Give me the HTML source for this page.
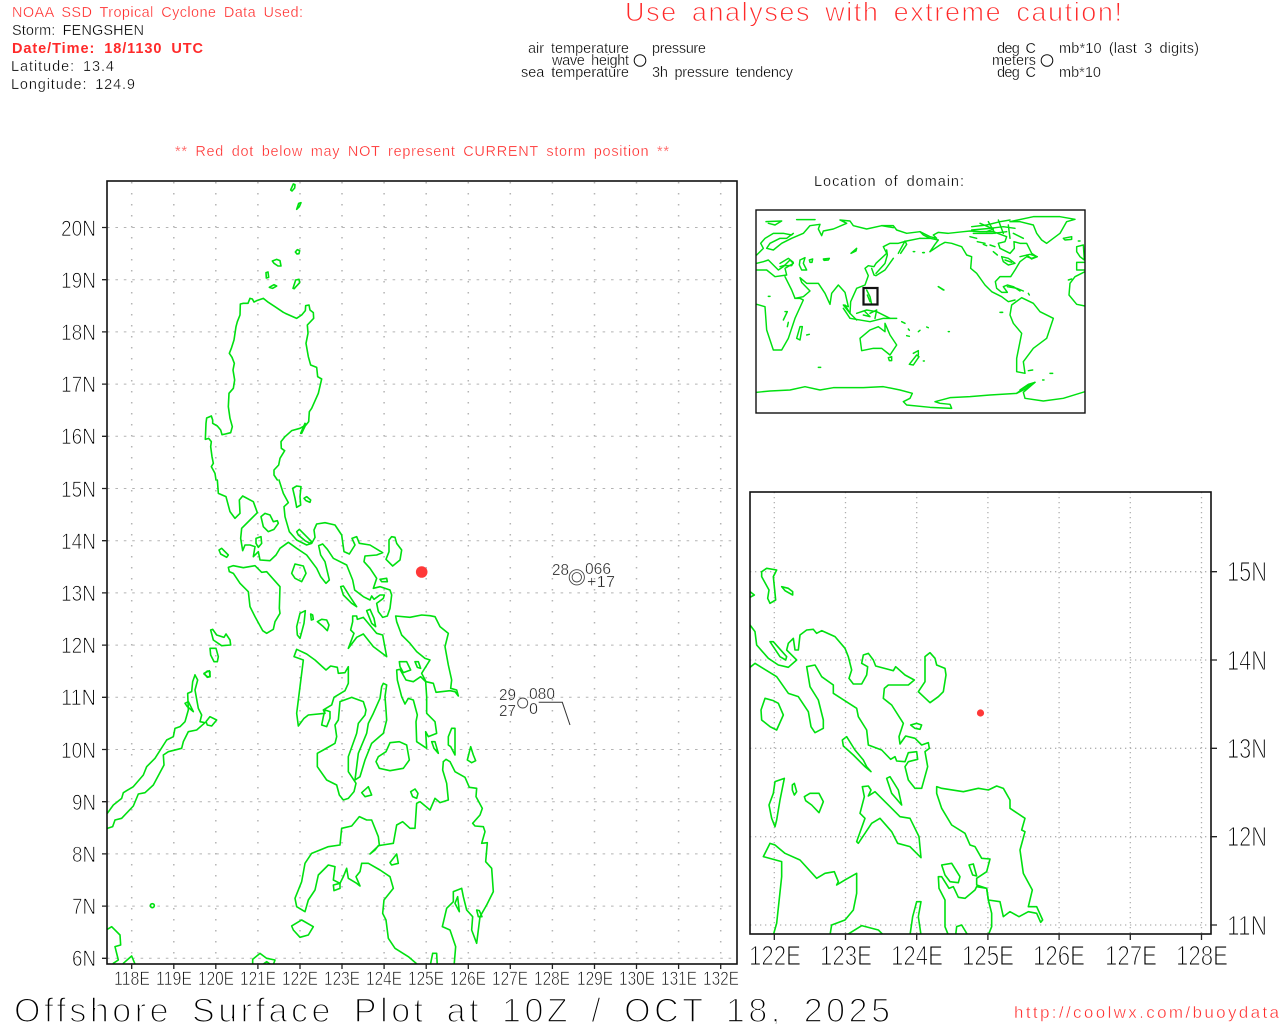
<!DOCTYPE html>
<html>
<head>
<meta charset="utf-8">
<title>Offshore Surface Plot</title>
<style>
html,body{margin:0;padding:0;background:#fff;width:1280px;height:1024px;overflow:hidden}
svg{display:block;position:absolute;left:0;top:0}
text{font-family:"Liberation Sans",sans-serif;white-space:pre}
.r{fill:#ff2a2a}
.k{fill:#000}
.s{font-size:14.5px;word-spacing:3px;stroke:#fff;stroke-width:.3px}
.l1{font-size:22px;stroke:#fff;stroke-width:.8px;fill:#000}
.l2{font-size:19px;stroke:#fff;stroke-width:.65px;fill:#000}
.l3{font-size:28px;stroke:#fff;stroke-width:1.1px;fill:#000}
.st{font-size:16px;fill:#222;stroke:#fff;stroke-width:.35px}
.c{fill:none;stroke:#00e010;stroke-linejoin:round;stroke-linecap:round}
.w polyline,.w polygon{fill:none;stroke:#00e010;stroke-width:4.4;stroke-linejoin:round;stroke-linecap:round}
</style>
</head>
<body>
<svg width="1280" height="1024" viewBox="0 0 1280 1024" xmlns="http://www.w3.org/2000/svg">
<defs>
<clipPath id="cm"><rect x="107" y="181" width="630" height="783"/></clipPath>
<clipPath id="ci"><rect x="750" y="492" width="461" height="442"/></clipPath>
<clipPath id="cw"><rect x="756" y="210" width="329" height="203"/></clipPath>
</defs>

<!-- header text -->
<text class="s r" x="12" y="17" textLength="291" lengthAdjust="spacing">NOAA SSD Tropical Cyclone Data Used:</text>
<text class="s k" x="12" y="35" textLength="132" lengthAdjust="spacing">Storm: FENGSHEN</text>
<text class="r" x="12" y="53" font-size="14.5" font-weight="bold" word-spacing="4" textLength="191" lengthAdjust="spacing">Date/Time: 18/1130 UTC</text>
<text class="s k" x="11" y="71" textLength="103" lengthAdjust="spacing">Latitude: 13.4</text>
<text class="s k" x="11" y="89" textLength="124" lengthAdjust="spacing">Longitude: 124.9</text>
<text class="r" x="625" y="21" font-size="27" word-spacing="5" stroke="#fff" stroke-width=".9" textLength="497" lengthAdjust="spacing">Use analyses with extreme caution!</text>
<text class="s k" x="629" y="53" text-anchor="end" textLength="101" lengthAdjust="spacing">air temperature</text>
<text class="s k" x="629" y="65" text-anchor="end" textLength="77" lengthAdjust="spacing">wave height</text>
<text class="s k" x="629" y="77" text-anchor="end" textLength="108" lengthAdjust="spacing">sea temperature</text>
<circle cx="640" cy="60.5" r="5.8" fill="none" stroke="#111" stroke-width="1"/>
<text class="s k" x="652" y="53" textLength="54" lengthAdjust="spacing">pressure</text>
<text class="s k" x="652" y="77" textLength="141" lengthAdjust="spacing">3h pressure tendency</text>
<text class="s k" x="997" y="53" textLength="39" lengthAdjust="spacing">deg C</text>
<text class="s k" x="992" y="65" textLength="44" lengthAdjust="spacing">meters</text>
<text class="s k" x="997" y="77" textLength="39" lengthAdjust="spacing">deg C</text>
<circle cx="1047" cy="60.5" r="5.8" fill="none" stroke="#111" stroke-width="1"/>
<text class="s k" x="1059" y="53" textLength="140" lengthAdjust="spacing">mb*10 (last 3 digits)</text>
<text class="s k" x="1059" y="77" textLength="42" lengthAdjust="spacing">mb*10</text>
<text class="s r" x="175" y="156" textLength="494" lengthAdjust="spacing">** Red dot below may NOT represent CURRENT storm position **</text>
<text class="s k" x="814" y="186" textLength="150" lengthAdjust="spacing">Location of domain:</text>

<!-- main grid -->
<g fill="none" stroke="#b4b4b4">
<path stroke-width="1" stroke-dasharray="2.6 5.8" d="M107 227.5H737M107 279.7H737M107 331.9H737M107 384.1H737M107 436.3H737M107 488.5H737M107 540.7H737M107 592.9H737M107 645.1H737M107 697.3H737M107 749.5H737M107 801.7H737M107 853.9H737M107 906.1H737M107 958.3H737"/>
<path stroke-width="1.5" stroke-dasharray="1.5 9.5" d="M131.7 182V964M173.8 182V964M215.8 182V964M257.9 182V964M300 182V964M342 182V964M384.1 182V964M426.2 182V964M468.3 182V964M510.3 182V964M552.4 182V964M594.5 182V964M636.5 182V964M678.6 182V964M720.7 182V964"/>
</g>

<!-- main coast -->
<g clip-path="url(#cm)">
<g transform="translate(200,180) scale(.33333)" class="c" stroke-width="4.8" fill="none">
<polygon points="272,30 280,12 285,14 284,24 276,33"/>
<polygon points="290,88 296,70 303,68 298,80"/>
<polygon points="286,216 292,209 299,212 297,221 291,222"/>
<polygon points="217,243 230,238 240,242 243,258 234,258 222,250"/>
<polygon points="198,278 204,276 206,292 199,294"/>
<polygon points="208,322 222,314 230,318 218,325"/>
<polygon points="279,325 287,300 297,298 299,308 288,320 283,326"/>
<polygon points="302,760 315,730 318,733 305,760"/>
<polyline points="48,900 45,880 34,860 40,850 36,830 32,800 34,785 26,775 16,778 18,730 20,714 34,708 38,720 38,730 52,738 62,750 66,764 76,762 92,758 97,740 90,715 85,680 87,640 100,625 104,600 99,570 103,550 96,532 88,520 94,505 102,480 108,440 112,425 120,405 121,372 130,370 144,370 150,355 157,357 162,366 170,362 190,355 205,367 225,380 250,397 256,400 290,415 305,405 316,392 317,377 327,375 330,390 340,398 341,415 322,435 324,460 318,490 325,530 332,555 350,562 353,590 365,597 355,640 335,685 328,695 326,725 318,735 300,745 275,752 255,770 243,785 244,805 254,812 240,835 236,855 222,870 222,885 232,900"/>
</g>
<g transform="translate(200,480) scale(.33333)" class="c" stroke-width="4.8" fill="none">
<polyline points="237,0 250,40 265,68 252,80 255,110 268,155 290,180 320,195 335,190 345,172 342,150 350,132 375,128 405,135 425,165 432,215 448,222 465,195 456,175 470,170 478,190 510,195 548,218 530,225 495,228 492,245 510,265 530,295 520,325 540,320 570,330 575,345 570,385 562,408 548,412 535,395 530,370 550,355 553,345 540,345 522,358 515,348 510,360 490,350 464,330 458,300 440,255 400,235 382,208 368,192 356,197 362,225 375,245 388,300 378,310 362,290 350,265 320,225 290,205 265,187 240,205 228,225 210,242 180,240 175,215 160,230 165,200 150,195 135,195 128,212 122,175 125,145 150,120 172,98 160,65 128,48 118,60 120,100 105,115 90,95 78,50 55,40 52,0"/>
<polygon points="290,155 298,148 335,185 330,190 315,182 295,165"/>
<polygon points="278,25 290,18 303,20 300,50 302,75 290,82 285,55"/>
<polygon points="312,55 320,50 332,60 330,67 318,62"/>
<polygon points="183,110 195,100 210,105 220,125 232,122 235,130 222,148 205,155 190,140"/>
<polygon points="168,175 183,170 185,190 175,202 168,190"/>
<polygon points="57,210 65,205 85,225 80,232 62,222"/>
<polygon points="575,170 585,172 590,190 605,210 600,240 578,258 558,238 567,215 567,180"/>
<polygon points="540,298 560,295 562,305 545,305"/>
<polygon points="85,262 100,257 130,263 165,257 185,277 200,275 240,320 238,385 240,400 225,425 220,448 200,460 188,452 165,410 150,380 145,335 120,310 100,280 88,275"/>
<polygon points="285,252 310,258 318,280 305,305 285,295 275,280"/>
<polygon points="300,400 316,392 312,430 300,475 292,465 290,440"/>
<polygon points="332,402 338,405 340,418 334,420"/>
<polygon points="352,425 365,418 380,420 387,435 382,452 370,440"/>
<polygon points="422,320 430,318 450,350 470,380 455,370 430,345"/>
<polygon points="500,392 510,388 522,415 527,440 515,430"/>
<polygon points="458,408 470,408 472,418 490,412 530,460 548,465 560,530 520,500 490,462 470,472 445,505 462,460 452,450 458,425"/>
<polygon points="587,408 630,412 665,405 690,407 705,410 720,440 745,460 735,500 745,555 755,600 752,625 770,630 775,648 765,635 750,632 708,637 700,610 678,605 665,580 690,540 675,535 650,515 630,490 605,465 590,425"/>
<polygon points="598,545 620,545 632,570 610,578 600,560"/>
<polygon points="645,545 655,545 662,565 652,562"/>
<polyline points="680,805 677,755 685,770 710,760 705,725 680,700 680,650 677,605 662,590 640,605 618,600 600,568 590,570 592,600 605,650 615,672 625,655 640,660 652,705 648,725 650,785 680,805"/>
<polygon points="32,450 38,448 50,465 72,472 78,462 90,480 92,495 65,497 40,480"/>
<polygon points="30,505 48,505 55,530 52,545 42,545 32,525"/>
<polygon points="12,580 28,572 30,590 22,592"/>
<polygon points="282,530 290,508 320,522 345,540 378,570 392,558 412,562 415,580 435,578 445,560 445,610 435,632 402,652 395,675 370,690 375,700 325,705 312,715 295,738 290,700 295,660 310,540"/>
</g>
<g transform="translate(280,700) scale(.33333)" class="c" stroke-width="4.8" fill="none">
<polygon points="135,30 150,35 150,55 140,80 125,75 130,50"/>
<polygon points="180,5 215,-8 250,5 258,30 255,45 235,70 230,100 205,170 205,215 228,250 222,275 205,295 190,300 178,285 170,255 140,240 112,200 112,160 130,150 165,130 170,110 165,75 175,60"/>
<polygon points="310,-50 320,-45 315,-10 318,30 320,60 310,100 275,130 255,180 240,230 225,240 235,160 260,100 265,70 280,40 300,-5 305,-40"/>
<polygon points="245,278 265,260 275,285 255,290"/>
<polygon points="288,185 295,170 318,155 330,128 358,125 380,135 388,180 370,205 330,212 298,205"/>
<polygon points="392,275 405,267 414,280 410,295 398,290"/>
<polygon points="505,135 505,110 515,85 525,85 525,130 525,165 512,140"/>
<polygon points="562,180 572,140 580,165 587,182 575,188"/>
<polygon points="455,125 465,125 475,160 462,145"/>
<polyline points="490,185 498,178 510,185 525,215 555,232 568,262 590,265 588,290 607,325 600,345 578,370 585,378 610,380 615,395 605,430 622,428 617,485 635,505 640,575 620,615 600,650 595,690 590,730 575,690 578,650 560,630 550,590 545,565 520,575 520,605 500,625 487,680 510,690 527,740 522,800"/>
<polyline points="420,800 385,770 345,745 325,715 318,660 308,640 312,600 340,565 330,530 300,510 265,490 245,490 240,515 228,530 240,558 230,550 205,535 200,505 190,530 180,550 160,540 165,500 145,495 115,525 105,570 85,600 75,635 50,620 45,595 65,545 75,490 95,460 145,440 180,435 185,385 215,378 238,350 260,360 275,360 295,410 298,435 270,462 285,450 295,437 340,430 350,375 368,365 390,385 405,385 410,310 420,305 450,330 465,295 480,308 505,300 500,250 488,210 490,185"/>
<polygon points="330,488 350,462 355,490 335,495"/>
<polygon points="35,678 65,660 100,680 85,705 60,712 40,690"/>
<polygon points="160,555 180,550 180,565 162,572"/>
<polyline points="450,800 458,760 470,760 472,800"/>
<polygon points="525,610 533,590 538,635 530,620"/>
<polygon points="590,630 598,632 606,650 595,650"/>
</g>
<g transform="translate(100,670) scale(.33333)" class="c" stroke-width="4.8" fill="none">
<polyline points="285,15 293,30 285,60 295,115 305,135 300,155 315,158 290,180 265,185 250,215 245,235 205,245 190,255 192,285 160,345 135,368 115,372 100,408 65,445 45,450 38,470 22,475"/>
<polyline points="22,430 40,405 65,385 70,368 100,350 130,315 140,290 165,265 200,210 220,200 225,175 240,170 255,155 265,120 263,70 275,65 278,35 285,15"/>
<polygon points="255,100 265,95 280,125 262,110"/>
<polygon points="318,155 330,140 350,150 335,168 322,165"/>
<polygon points="312,12 322,3 330,5 330,20 322,20"/>
<circle cx="157" cy="707" r="6"/>
<polyline points="22,778 35,770 60,795 62,825 45,830 55,870 40,880"/>
<polyline points="70,880 95,858 105,882"/>
<polyline points="458,882 458,868 480,850 500,865 525,870 520,884"/>
<polyline points="490,882 500,875 510,882"/>
</g>
</g>

<!-- main frame and ticks -->
<rect x="107" y="181" width="630" height="783" fill="none" stroke="#111" stroke-width="1.6"/>
<path stroke="#222" stroke-width="1.3" fill="none" d="M102 227.5H107M102 279.7H107M102 331.9H107M102 384.1H107M102 436.3H107M102 488.5H107M102 540.7H107M102 592.9H107M102 645.1H107M102 697.3H107M102 749.5H107M102 801.7H107M102 853.9H107M102 906.1H107M102 958.3H107M131.7 964V969M173.8 964V969M215.8 964V969M257.9 964V969M300 964V969M342 964V969M384.1 964V969M426.2 964V969M468.3 964V969M510.3 964V969M552.4 964V969M594.5 964V969M636.5 964V969M678.6 964V969M720.7 964V969"/>

<!-- main labels -->
<g text-anchor="end">
<text class="l1" x="96" y="236" textLength="35" lengthAdjust="spacingAndGlyphs">20N</text>
<text class="l1" x="96" y="288" textLength="35" lengthAdjust="spacingAndGlyphs">19N</text>
<text class="l1" x="96" y="340" textLength="35" lengthAdjust="spacingAndGlyphs">18N</text>
<text class="l1" x="96" y="392" textLength="35" lengthAdjust="spacingAndGlyphs">17N</text>
<text class="l1" x="96" y="444" textLength="35" lengthAdjust="spacingAndGlyphs">16N</text>
<text class="l1" x="96" y="497" textLength="35" lengthAdjust="spacingAndGlyphs">15N</text>
<text class="l1" x="96" y="549" textLength="35" lengthAdjust="spacingAndGlyphs">14N</text>
<text class="l1" x="96" y="601" textLength="35" lengthAdjust="spacingAndGlyphs">13N</text>
<text class="l1" x="96" y="653" textLength="35" lengthAdjust="spacingAndGlyphs">12N</text>
<text class="l1" x="96" y="705" textLength="35" lengthAdjust="spacingAndGlyphs">11N</text>
<text class="l1" x="96" y="758" textLength="35" lengthAdjust="spacingAndGlyphs">10N</text>
<text class="l1" x="96" y="810" textLength="24" lengthAdjust="spacingAndGlyphs">9N</text>
<text class="l1" x="96" y="862" textLength="24" lengthAdjust="spacingAndGlyphs">8N</text>
<text class="l1" x="96" y="914" textLength="24" lengthAdjust="spacingAndGlyphs">7N</text>
<text class="l1" x="96" y="966" textLength="24" lengthAdjust="spacingAndGlyphs">6N</text>
</g>
<g text-anchor="middle">
<text class="l2" x="132" y="985" textLength="36" lengthAdjust="spacingAndGlyphs">118E</text>
<text class="l2" x="174" y="985" textLength="36" lengthAdjust="spacingAndGlyphs">119E</text>
<text class="l2" x="216" y="985" textLength="36" lengthAdjust="spacingAndGlyphs">120E</text>
<text class="l2" x="258" y="985" textLength="36" lengthAdjust="spacingAndGlyphs">121E</text>
<text class="l2" x="300" y="985" textLength="36" lengthAdjust="spacingAndGlyphs">122E</text>
<text class="l2" x="342" y="985" textLength="36" lengthAdjust="spacingAndGlyphs">123E</text>
<text class="l2" x="384" y="985" textLength="36" lengthAdjust="spacingAndGlyphs">124E</text>
<text class="l2" x="426" y="985" textLength="36" lengthAdjust="spacingAndGlyphs">125E</text>
<text class="l2" x="468" y="985" textLength="36" lengthAdjust="spacingAndGlyphs">126E</text>
<text class="l2" x="510" y="985" textLength="36" lengthAdjust="spacingAndGlyphs">127E</text>
<text class="l2" x="552" y="985" textLength="36" lengthAdjust="spacingAndGlyphs">128E</text>
<text class="l2" x="595" y="985" textLength="36" lengthAdjust="spacingAndGlyphs">129E</text>
<text class="l2" x="637" y="985" textLength="36" lengthAdjust="spacingAndGlyphs">130E</text>
<text class="l2" x="679" y="985" textLength="36" lengthAdjust="spacingAndGlyphs">131E</text>
<text class="l2" x="721" y="985" textLength="36" lengthAdjust="spacingAndGlyphs">132E</text>
</g>

<!-- storm dot -->
<circle cx="421.7" cy="572" r="5.8" fill="#ff3838"/>

<!-- station plots -->
<text class="st" x="552" y="575" textLength="17" lengthAdjust="spacingAndGlyphs">28</text>
<text class="st" x="585" y="574" textLength="26" lengthAdjust="spacingAndGlyphs">066</text>
<text class="st" x="587" y="587" textLength="28" lengthAdjust="spacing">+17</text>
<circle cx="576.8" cy="577.3" r="7.6" fill="none" stroke="#444" stroke-width=".9"/>
<circle cx="576.8" cy="577.3" r="4.7" fill="none" stroke="#444" stroke-width=".9"/>
<text class="st" x="499" y="700" textLength="17" lengthAdjust="spacingAndGlyphs">29</text>
<text class="st" x="529" y="699" textLength="26" lengthAdjust="spacingAndGlyphs">080</text>
<text class="st" x="499" y="716" textLength="17" lengthAdjust="spacingAndGlyphs">27</text>
<text class="st" x="529" y="714" textLength="9" lengthAdjust="spacingAndGlyphs">0</text>
<circle cx="522.7" cy="703" r="5" fill="none" stroke="#444" stroke-width=".9"/>
<polyline points="538.7,702.3 562.3,702.3 570,725" fill="none" stroke="#333" stroke-width="1"/>

<!-- world map -->
<g clip-path="url(#cw)">
<g transform="translate(750,205) scale(.33333)" class="w">
<polyline points="20,562 60,558 120,555 165,545 210,555 250,548 340,548 400,545 450,555 487,565 480,580 460,590 470,600 540,607 605,610 600,598 570,595 555,590 600,578 660,575 720,570 800,565 820,550 855,532 820,562 825,580 880,588 940,580 1005,560"/>
<polyline points="800,565 830,550 855,532 835,538 810,555"/>
<polyline points="20,298 45,305 50,375 70,435 95,435 115,400 135,340 160,285 150,280 135,280"/>
<polyline points="20,150 40,130 32,115 45,100 70,85 100,85 125,90 130,85 110,100 90,100 60,115 50,130 70,135 95,115 125,100 160,85 180,62 210,58 205,72 215,92 220,78 250,72 290,55 270,45 300,48 310,62 350,72 395,62 430,62 440,75 470,85 510,80 520,90 540,100 510,100"/>
<polyline points="20,175 40,170 55,165 70,180 85,195 100,185 120,165 130,175 105,190 110,210 75,215 50,195 20,195"/>
<polyline points="90,175 115,160 130,172 125,182 100,182 90,185"/>
<polyline points="150,165 165,158 160,175 170,195 155,195 148,180 150,165"/>
<polyline points="105,215 125,255 135,280 160,275 180,258 155,232 150,218 170,235 205,235 225,265 240,298 245,265 265,240 285,262 295,305 280,300 300,325"/>
<polyline points="300,325 302,290 320,250 345,240 355,212 345,190 355,182 372,185 378,175 410,145 400,125 420,115 445,115 470,108 510,100"/>
<polyline points="365,190 372,210 378,212 405,195 430,160"/>
<polyline points="378,205 405,175 412,150 410,135"/>
<polyline points="445,145 465,108 470,118 452,145"/>
<polygon points="178,165 188,162 186,172 180,172"/>
<polygon points="220,162 238,160 235,165 222,166"/>
<polygon points="303,145 320,130 318,138"/>
<polyline points="48,50 95,48 75,60 55,55"/>
<polyline points="140,44 195,44"/>
<polyline points="395,62 430,68"/>
<polyline points="350,255 360,275 365,298 378,298"/>
<polyline points="352,270 360,290"/>
<polyline points="280,310 300,340 360,350 400,340 440,340"/>
<polyline points="320,325 350,315 380,320 420,340"/>
<polyline points="285,300 300,325 320,345"/>
<polyline points="360,325 380,315 375,340"/>
<polyline points="340,330 360,335 345,320"/>
<polygon points="330,400 360,375 385,365 405,380 405,355 420,390 440,420 420,450 395,430 370,430 335,437"/>
<polygon points="415,458 425,455 425,467 418,467"/>
<polygon points="140,400 150,365 157,365 150,405"/>
<polyline points="105,320 112,320 100,345"/>
<polyline points="115,352 112,365"/>
<polygon points="478,478 500,450 507,455 490,480"/>
<polyline points="490,445 505,437 505,450"/>
<polyline points="565,245 580,255"/>
<polyline points="170,390 178,388"/>
<polyline points="205,487 212,487"/>
<polyline points="55,274 60,274"/>
<polyline points="455,350 465,355"/>
<polyline points="475,372 478,376"/>
<polyline points="505,380 510,376"/>
<polyline points="530,366 535,368"/>
<polyline points="595,380 598,380"/>
<polyline points="470,392 478,394"/>
<polyline points="520,468 523,468"/>
<polyline points="835,497 848,495"/>
<polyline points="900,505 908,505"/>
<polyline points="878,525 882,525"/>
<polyline points="755,322 758,322"/>
<polyline points="490,140 494,140"/>
<polyline points="518,143 522,143"/>
<polygon points="785,300 815,278 850,295 870,320 910,340 890,400 850,430 820,470 825,505 800,500 800,460 815,385 790,355 780,330"/>
</g>
<g transform="translate(920,205) scale(.33333)" class="w">
<polyline points="30,140 60,120 75,112 95,115 125,125 140,150 155,155 152,190 170,205 195,240 215,260 245,275 265,290 285,285"/>
<polyline points="0,80 30,95 50,100 40,90 55,82 85,85 130,80 150,78 180,80 220,80 260,95 255,110 235,115 240,130 270,145 283,130 282,110 300,115 320,115 335,145 350,155 335,160 320,155 300,170 285,195 272,215 240,215 226,230 230,250 245,262 262,262 250,245 262,240 280,245 300,258"/>
<polyline points="30,100 55,105 45,118 30,140"/>
<polyline points="270,50 340,35 420,35 465,43 440,50 420,85 380,115 365,105 350,85 340,60 300,50 270,50"/>
<polyline points="155,65 200,60 240,50 270,45"/>
<polyline points="155,75 210,70 250,65 285,70"/>
<polyline points="160,85 220,85 260,80"/>
<polyline points="205,50 225,85"/>
<polyline points="235,45 250,85"/>
<polyline points="265,60 270,100"/>
<polyline points="280,85 310,100"/>
<polyline points="180,55 220,72 200,80"/>
<polyline points="150,95 170,100"/>
<polyline points="172,110 195,115"/>
<polyline points="190,118 200,122"/>
<polyline points="210,120 225,125"/>
<polyline points="220,140 232,150"/>
<polyline points="245,155 265,160 285,175 265,180 250,170 245,155"/>
<polyline points="255,165 275,172"/>
<polyline points="300,155 330,148 352,155 335,162 320,150"/>
<polyline points="262,245 290,250 310,258"/>
<polyline points="325,265 328,270"/>
<polyline points="55,245 72,255"/>
<polyline points="240,322 246,322"/>
<polyline points="430,100 455,95 455,103 435,105 430,100"/>
<polygon points="470,125 490,120 493,165 480,155 470,140"/>
<polyline points="475,108 480,108"/>
<polyline points="495,172 470,172 470,195 495,195"/>
<polyline points="495,200 465,215 450,235 447,270 470,298 495,303"/>
<polyline points="445,225 455,222"/>
<polyline points="10,143 13,143"/>
</g>
</g>
<rect x="756" y="210" width="329" height="203" fill="none" stroke="#111" stroke-width="1.4"/>
<rect x="863.5" y="288" width="14" height="16.5" fill="none" stroke="#111" stroke-width="2.2"/>

<!-- inset grid -->
<g fill="none" stroke="#b0b0b0" stroke-width="1.3" stroke-dasharray="1.3 3.7">
<path d="M750 571.7H1211M750 660H1211M750 748.3H1211M750 836.7H1211M750 925H1211M774.3 492V934M845.5 492V934M916.7 492V934M987.9 492V934M1059.1 492V934M1130.3 492V934M1201.5 492V934"/>
</g>

<!-- inset coast -->
<g clip-path="url(#ci)">
<g transform="translate(745,560) scale(.33333)" class="c" stroke-width="4.8" fill="none">
<polygon points="50,35 65,25 95,30 85,50 92,120 75,130 68,115 72,90 50,50"/>
<polygon points="110,80 130,85 143,95 143,105 120,92"/>
<polyline points="15,95 28,105 15,112"/>
<polyline points="15,195 30,215 35,255 70,295 100,315 130,322 155,300 135,280 125,270 130,250 145,235 150,270 160,270 165,225 185,210 205,208 215,220 230,212 270,230 300,265 310,290 320,330 312,355 325,372 350,372 365,345 368,320 350,310 355,285 370,280 385,300 392,318 445,332 452,320 480,345 508,360 490,375 430,375 418,385 415,415 440,435 475,490 462,530 465,552 482,528 510,535 530,555 550,548 553,565 540,575 548,620 530,685 510,685 490,660 480,620 490,605 518,598 515,575 490,578 480,605 455,603 450,590 437,598 410,570 370,555 365,510 340,470 335,445 265,400 265,375 230,350 210,315 185,320 195,380 220,420 235,480 235,505 210,518 198,500 190,455 160,410 130,400 95,350 30,310 15,322"/>
<polygon points="75,245 85,245 125,290 122,300 105,290"/>
<polygon points="540,290 555,278 570,295 575,315 600,325 603,345 595,395 580,410 555,428 520,395 540,365"/>
<polygon points="497,495 515,490 530,495 525,508 510,505"/>
<polygon points="60,415 85,422 100,430 115,465 95,510 75,500 50,480 48,450"/>
<polygon points="292,540 305,530 330,570 355,600 365,620 378,635 360,620 325,585 295,558"/>
<polygon points="425,655 435,650 460,690 470,735 440,700"/>
<polygon points="90,665 118,655 105,720 95,780 90,800 80,775 72,735 85,700"/>
<polygon points="142,675 148,670 155,695 148,705 142,690"/>
<polygon points="178,710 195,700 222,700 235,725 222,758 200,735 182,722"/>
<polygon points="352,680 370,678 378,690 370,708 390,695 420,725 465,770 495,775 522,830 528,893 495,860 458,850 440,815 405,775 380,790 340,850 335,845 360,775 345,760 358,710"/>
<polygon points="575,680 590,685 655,695 700,685 730,690 755,678 775,685 795,720 795,745 840,775 830,810 840,815 825,870 835,940 862,990 850,1040 875,1040 893,1080 887,1087 875,1060 850,1055 822,1070 795,1055 775,1070 765,1025 730,1020 725,985 695,975 695,955 725,935 735,897 710,895 690,860 675,855 660,820 620,795 590,745 575,700"/>
<polygon points="590,915 620,910 645,950 640,968 615,965 600,945"/>
<polygon points="672,915 685,912 695,948 683,945"/>
<polyline points="730,1125 740,1100 740,1060 730,1020 725,985 695,980 690,990 660,1015 640,1012 625,980 612,985 590,950 580,950 582,985 600,1020 600,1100 610,1125"/>
<polyline points="85,1125 95,1090 110,950 110,905 55,890 75,850 90,855 120,880 165,900 215,955 240,940 268,935 280,965 275,975 300,960 335,940 335,1000 325,1050 300,1080 260,1095 255,1125"/>
<polyline points="305,1125 350,1097 400,1110 415,1125"/>
<polyline points="495,1125 503,1070 515,1025 528,1025 520,1070 528,1125"/>
<polyline points="632,1125 635,1100 650,1095 668,1125"/>
</g>
</g>

<!-- inset frame and ticks -->
<rect x="750" y="492" width="461" height="442" fill="none" stroke="#111" stroke-width="1.6"/>
<path stroke="#222" stroke-width="1.3" fill="none" d="M1211 571.7H1217M1211 660H1217M1211 748.3H1217M1211 836.7H1217M1211 925H1217M774.3 934V940M845.5 934V940M916.7 934V940M987.9 934V940M1059.1 934V940M1130.3 934V940M1201.5 934V940"/>
<circle cx="980.5" cy="713" r="3.6" fill="#ff3838"/>

<!-- inset labels -->
<g text-anchor="middle">
<text class="l3" x="775" y="965" textLength="52" lengthAdjust="spacingAndGlyphs">122E</text>
<text class="l3" x="846" y="965" textLength="52" lengthAdjust="spacingAndGlyphs">123E</text>
<text class="l3" x="917" y="965" textLength="52" lengthAdjust="spacingAndGlyphs">124E</text>
<text class="l3" x="988" y="965" textLength="52" lengthAdjust="spacingAndGlyphs">125E</text>
<text class="l3" x="1059" y="965" textLength="52" lengthAdjust="spacingAndGlyphs">126E</text>
<text class="l3" x="1131" y="965" textLength="52" lengthAdjust="spacingAndGlyphs">127E</text>
<text class="l3" x="1202" y="965" textLength="52" lengthAdjust="spacingAndGlyphs">128E</text>
</g>
<text class="l3" x="1227" y="581" textLength="40" lengthAdjust="spacingAndGlyphs">15N</text>
<text class="l3" x="1227" y="670" textLength="40" lengthAdjust="spacingAndGlyphs">14N</text>
<text class="l3" x="1227" y="758" textLength="40" lengthAdjust="spacingAndGlyphs">13N</text>
<text class="l3" x="1227" y="846" textLength="40" lengthAdjust="spacingAndGlyphs">12N</text>
<text class="l3" x="1227" y="935" textLength="40" lengthAdjust="spacingAndGlyphs">11N</text>

<!-- footer -->
<text x="14" y="1022" font-size="34" fill="#000" stroke="#fff" stroke-width="1.5" word-spacing="7" textLength="876" lengthAdjust="spacing">Offshore Surface Plot at 10Z / OCT 18, 2025</text>
<text class="r" x="1014" y="1018" font-size="17" stroke="#fff" stroke-width=".4" textLength="265" lengthAdjust="spacing">http://coolwx.com/buoydata</text>
</svg>
</body>
</html>
